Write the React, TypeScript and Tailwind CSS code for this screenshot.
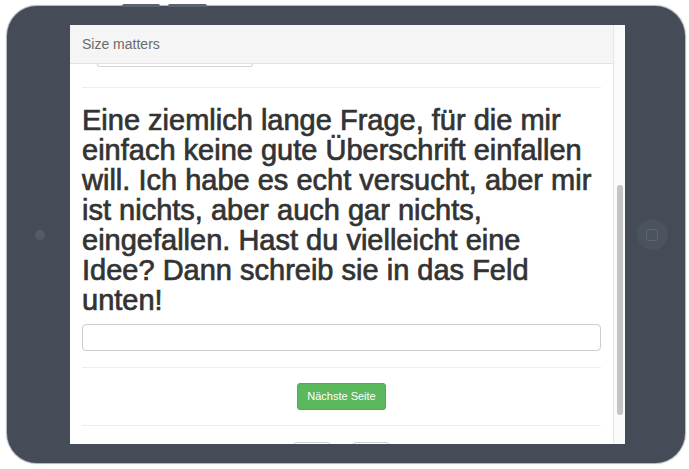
const lines = [
  "Eine ziemlich lange Frage, für die mir",
  "einfach keine gute Überschrift einfallen",
  "will. Ich habe es echt versucht, aber mir",
  "ist nichts, aber auch gar nichts,",
  "eingefallen. Hast du vielleicht eine",
  "Idee? Dann schreib sie in das Feld",
  "unten!",
];

const App = () => {
  return (
    <div className="min-h-screen bg-white pt-[6px] pl-[7px] font-['Liberation_Sans',Arial,sans-serif]">
      <div className="relative flex w-[678px] h-[457px] rounded-[30px] bg-[#454c57] shadow-[0_0_1px_1px_rgba(120,128,140,0.6)]">
        {/* top hardware buttons */}
        <div className="absolute -top-[2px] left-[115px] w-[38px] h-[3px] rounded-t-[2px] bg-[#5b6370]" />
        <div className="absolute -top-[2px] left-[161px] w-[39px] h-[3px] rounded-t-[2px] bg-[#5b6370]" />

        <div className="w-[63px] flex items-center justify-center pl-[3px]">
          <div className="w-[10px] h-[10px] rounded-full bg-[#535b67]" />
        </div>

        <div className="mt-[19px] w-[555px] h-[419px] bg-white flex overflow-hidden">
          <div className="flex-1 flex flex-col">
            <div className="h-[39px] shrink-0 bg-[#f5f5f5] border-b border-[#e3e3e3] px-3 flex items-center text-[14px] text-[#6a6a6a]">
              Size matters
            </div>
            <div className="px-3">
              <div className="ml-[15px] w-[156px] h-[3px] border-x border-b border-[#d5d5d5] rounded-b-[3px]" />
              <div className="mt-[20px] border-t border-[#eee]" />
              <h2 className="mt-[17px] text-[29px] leading-[30px] font-normal text-[#333] [-webkit-text-stroke:0.7px_#333]">
                {lines.map((line, i) => (
                  <span key={i} className="block">
                    {line}
                  </span>
                ))}
              </h2>
              <input
                type="text"
                className="mt-[9px] block w-full h-[27px] rounded-[4px] border border-[#ccc] bg-white"
              />
              <div className="mt-[16px] border-t border-[#eee]" />
              <div className="flex justify-center pt-[15px]">
                <button className="w-[89px] h-[27px] rounded-[3px] bg-[#5cb85c] border border-[#4cae4c] text-white text-[11px]">
                  Nächste Seite
                </button>
              </div>
              <div className="mt-[15px] border-t border-[#eee]" />
              <div className="flex justify-center gap-[21px] pt-[16px]">
                <div className="w-[38px] h-[20px] rounded-[4px] border border-[#ccc]" />
                <div className="w-[38px] h-[20px] rounded-[4px] border border-[#ccc]" />
              </div>
            </div>
          </div>
          <div className="w-[12px] shrink-0 bg-[#fafafa] border-l border-[#e8e8e8]">
            <div className="mx-auto mt-[160px] w-[6px] h-[230px] rounded-full bg-[#c4c4c4]" />
          </div>
        </div>

        <div className="flex-1 flex items-center justify-center pr-[6px]">
          <div className="w-[31px] h-[31px] rounded-full bg-[#4b535f] flex items-center justify-center">
            <div className="w-[12px] h-[12px] rounded-[3px] border border-[#5f6773]" />
          </div>
        </div>
      </div>
    </div>
  );
};

export default App;
